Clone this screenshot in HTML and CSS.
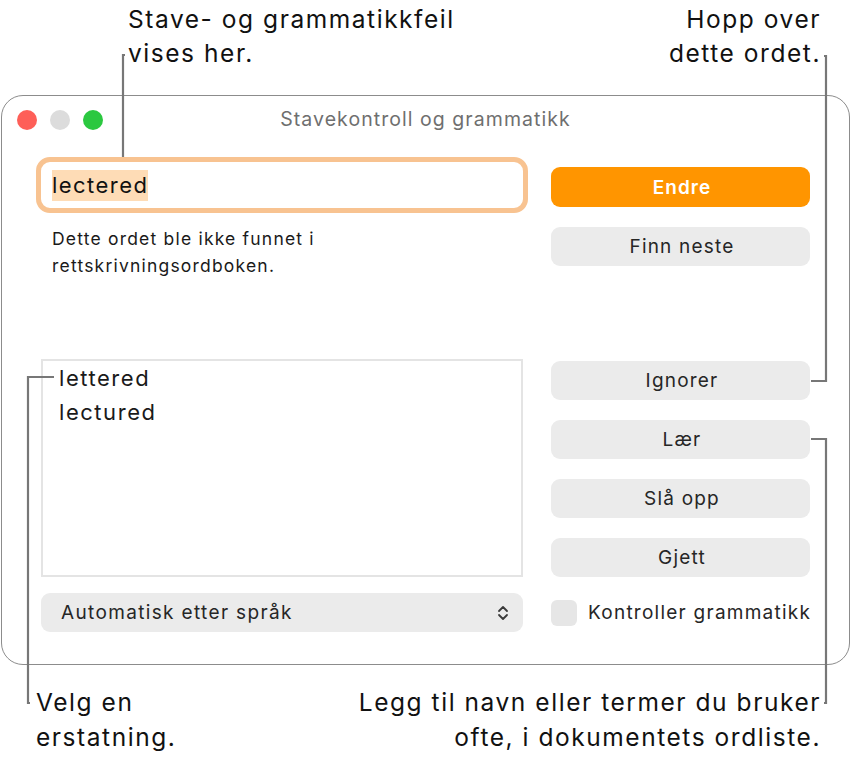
FILE: index.html
```html
<!DOCTYPE html>
<html lang="no">
<head>
<meta charset="utf-8">
<title>Stavekontroll og grammatikk</title>
<link rel="stylesheet" href="styles.css">
</head>
<body>
<div class="page">
  <div class="captions captions-top">
    <p class="cap cap-left">Stave- og grammatikkfeil<br>vises her.</p>
    <p class="cap cap-right">Hopp over<br>dette ordet.</p>
  </div>

  <div class="window">
    <div class="titlebar">
      <div class="lights">
        <span class="light red"></span>
        <span class="light gray"></span>
        <span class="light green"></span>
      </div>
      <div class="title">Stavekontroll og grammatikk</div>
    </div>

    <div class="content">
      <div class="cell left-top">
        <div class="field"><span class="sel">lectered</span></div>
        <p class="desc">Dette ordet ble ikke funnet i<br>rettskrivningsordboken.</p>
      </div>
      <div class="cell right-top">
        <button class="btn primary">Endre</button>
        <button class="btn">Finn neste</button>
      </div>

      <div class="cell list">
        <div class="item">lettered</div>
        <div class="item">lectured</div>
      </div>
      <div class="cell right-mid">
        <button class="btn">Ignorer</button>
        <button class="btn">Lær</button>
        <button class="btn">Slå opp</button>
        <button class="btn">Gjett</button>
      </div>

      <div class="cell select">
        <span>Automatisk etter språk</span>
        <svg class="chev" width="12" height="18" viewBox="0 0 12 18"><path d="M2 7 L6 3 L10 7 M2 11 L6 15 L10 11" fill="none" stroke="#3a3a3a" stroke-width="1.8" stroke-linecap="round" stroke-linejoin="round"/></svg>
      </div>
      <div class="cell check">
        <span class="box"></span>
        <span class="check-label">Kontroller grammatikk</span>
      </div>
    </div>
  </div>

  <div class="captions captions-bottom">
    <p class="cap cap-left2">Velg en<br>erstatning.</p>
    <p class="cap cap-right">Legg til navn eller termer du bruker<br>ofte, i dokumentets ordliste.</p>
  </div>

  <svg class="callouts" width="851" height="761" viewBox="0 0 851 761">
    <g fill="none" stroke="#777777" stroke-width="2.2">
      <polyline points="125,55 123,55 123,157"/>
      <polyline points="824,56 826,56 826,381 811,381"/>
      <polyline points="811,439 826,439 826,703 824,703"/>
      <polyline points="54,377 28,377 28,703 30,703"/>
    </g>
  </svg>
</div>
</body>
</html>
```

FILE: styles.css
```css
* { box-sizing: border-box; }

html, body {
  margin: 0;
  padding: 0;
  background: #ffffff;
}

body {
  font-family: Inter, "Noto Sans", "Liberation Sans", sans-serif;
  color: #1a1a1a;
  width: 851px;
  height: 761px;
  overflow: hidden;
}

.page {
  position: relative;
  width: 851px;
  height: 761px;
}

.captions {
  display: flex;
  justify-content: space-between;
  align-items: flex-start;
}

.cap {
  margin: 0;
  font-size: 24.5px;
  line-height: 34px;
  color: #111;
  letter-spacing: 1.55px;
}

.captions-top {
  height: 95px;
  padding: 2px 30px 0 128px;
}

.cap-right { text-align: right; }

.captions-bottom {
  padding: 20px 30px 0 36px;
}

.captions-bottom .cap { line-height: 35px; }

/* window */
.window {
  margin-left: 1px;
  width: 849px;
  height: 570px;
  border: 1px solid #8c8c8c;
  border-radius: 22px;
  background: #fff;
}

.titlebar {
  position: relative;
  height: 50px;
  display: flex;
  align-items: center;
  justify-content: center;
}

.lights {
  position: absolute;
  left: 15px;
  top: 14px;
  display: flex;
  gap: 13px;
}

.light {
  width: 20px;
  height: 20px;
  border-radius: 50%;
}
.light.red { background: #fe5f58; }
.light.gray { background: #dcdcdc; }
.light.green { background: #2bc840; }

.title {
  font-size: 19.5px;
  color: #6f6f6f;
  letter-spacing: 1.05px;
  margin-top: -4px;
}

.content {
  display: grid;
  grid-template-columns: 482px 259px;
  grid-template-rows: 186px 218px 39px;
  column-gap: 28px;
  row-gap: 16px;
  padding: 11px 0 0 39px;
}

.left-top {
  display: flex;
  flex-direction: column;
}

.field {
  margin: 0 -5px;
  height: 56px;
  border: 5px solid #f8c391;
  border-radius: 14px;
  padding: 0 0 0 11px;
  display: flex;
  align-items: center;
  font-size: 22px;
  letter-spacing: 1.45px;
  color: #111;
}

.sel {
  background: #fedcb6;
  padding: 1px 0 2px;
  line-height: 28px;
}

.desc {
  margin: 12px 0 0 11px;
  font-size: 17.5px;
  line-height: 27px;
  letter-spacing: 1.2px;
  color: #1a1a1a;
}

.right-top,
.right-mid {
  display: flex;
  flex-direction: column;
  gap: 20px;
}

.right-top { padding-top: 10px; }
.right-top .btn:first-child { height: 40px; }
.right-mid { padding-top: 2px; }

.btn {
  height: 39px;
  border: none;
  border-radius: 9px;
  background: #ebebeb;
  font-family: inherit;
  font-size: 19px;
  letter-spacing: 1.2px;
  color: #262626;
  padding: 0 0 0 3px;
}

.btn.primary {
  background: #ff9500;
  color: #fff;
  font-weight: 600;
  letter-spacing: 1px;
}

.list {
  border: 2px solid #e4e4e4;
  padding: 0 0 0 16px;
}

.item {
  font-size: 22px;
  line-height: 34px;
  letter-spacing: 1.55px;
  color: #1a1a1a;
}

.select {
  background: #ebebeb;
  border-radius: 9px;
  display: flex;
  align-items: center;
  justify-content: space-between;
  padding: 0 14px 0 20px;
  font-size: 19px;
  letter-spacing: 1.35px;
  color: #262626;
}

.check {
  display: flex;
  align-items: center;
  gap: 11px;
}

.box {
  flex: 0 0 26px;
  width: 26px;
  height: 26px;
  border-radius: 6px;
  background: #e6e6e6;
}

.check-label {
  font-size: 19px;
  letter-spacing: 1.25px;
  color: #262626;
  white-space: nowrap;
}

.callouts {
  position: absolute;
  left: 0;
  top: 0;
  pointer-events: none;
}
```
